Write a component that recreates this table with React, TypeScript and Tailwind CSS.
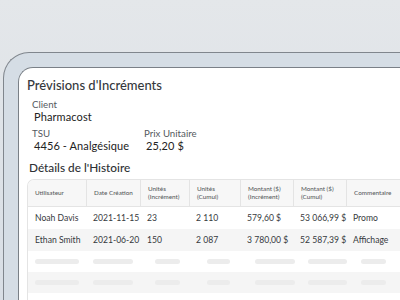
import React from "react";

type Row = {
  user: string;
  date: string;
  incr: string;
  cumul: string;
  amtIncr: string;
  amtCumul: string;
  comment: string;
};

const rows: Row[] = [
  { user: "Noah Davis", date: "2021-11-15", incr: "23", cumul: "2 110", amtIncr: "579,60 $", amtCumul: "53 066,99 $", comment: "Promo" },
  { user: "Ethan Smith", date: "2021-06-20", incr: "150", cumul: "2 087", amtIncr: "3 780,00 $", amtCumul: "52 587,39 $", comment: "Affichage" },
];

const cols = [
  { w: "w-[58px]", head: ["Utilisateur"] },
  { w: "w-[54px]", head: ["Date Création"] },
  { w: "w-[49px]", head: ["Unités", "(Incrément)"] },
  { w: "w-[51px]", head: ["Unités", "(Cumul)"] },
  { w: "w-[53px]", head: ["Montant ($)", "(Incrément)"] },
  { w: "w-[53px]", head: ["Montant ($)", "(Cumul)"] },
  { w: "w-[70px]", head: ["Commentaire"] },
];

// skeleton bar widths per column for the loading rows
const skel = [
  "ml-[7px] w-[44px]",
  "ml-[7px] w-[40px]",
  "ml-[15px] w-[25px]",
  "ml-[18px] w-[23px]",
  "ml-[15px] w-[40px]",
  "ml-[15px] w-[39px]",
  "ml-[15px] w-[25px]",
];

function Field({ label, value, className = "" }: { label: string; value: string; className?: string }) {
  return (
    <div className={`flex flex-col ${className}`}>
      <span className="text-[9.7px] leading-[12px] text-[#555a60]">{label}</span>
      <span className="ml-[2px] text-[11px] leading-[13px] tracking-[0.1px] text-[#222]">{value}</span>
    </div>
  );
}

export default function App() {
  return (
    <div
      className="h-[300px] w-[400px] overflow-hidden bg-gradient-to-b from-[#e4e7ea] to-[#d8dee5]"
      style={{ fontFamily: "Lato, 'Open Sans', sans-serif" }}
    >
      <div className="ml-[3px] mt-[52px] h-[300px] w-[480px] rounded-tl-[26px] border-l-[1.5px] border-t-[1.5px] border-[#80868d] bg-[#d5dde5] pl-[14px] pt-[14px]">
        <div className="h-[300px] w-[460px] rounded-tl-[15px] border-l-[1.5px] border-t-[1.5px] border-[#7a8087] bg-white pl-[8px] pt-[7px]">
          <h1 className="text-[13px] font-medium leading-[20px] text-[#35383c]">
            Prévisions d'Incréments
          </h1>
          <div className="ml-[5px] mt-[3px] flex flex-col gap-[4px]">
            <Field label="Client" value="Pharmacost" />
            <div className="flex">
              <Field label="TSU" value="4456 - Analgésique" className="w-[112px]" />
              <Field label="Prix Unitaire" value="25,20 $" />
            </div>
          </div>
          <h2 className="ml-[2px] mt-[8px] text-[11.8px] font-medium leading-[16px] text-[#2e3135]">
            Détails de l'Histoire
          </h2>
          <div className="mt-[3px] w-[420px] overflow-hidden rounded-tl-[7px] border-l border-t border-[#e4e4e4]">
            <div className="flex h-[27px] items-center border-b border-[#e4e4e4] bg-[#f7f7f7]">
              {cols.map((c, i) => (
                <div
                  key={i}
                  className={`${c.w} flex h-full shrink-0 flex-col justify-center px-[7px] text-[6.3px] font-medium leading-[8px] text-[#5a5d61] ${i > 0 ? "border-l border-[#e4e4e4]" : ""}`}
                >
                  {c.head.map((h) => (
                    <span key={h} className="whitespace-nowrap">{h}</span>
                  ))}
                </div>
              ))}
            </div>
            {rows.map((r, i) => (
              <div
                key={r.user}
                className={`flex h-[22px] items-center text-[8.6px] text-[#36393d] ${i % 2 === 1 ? "bg-[#f5f5f5]" : "bg-white"}`}
              >
                {[r.user, r.date, r.incr, r.cumul, r.amtIncr, r.amtCumul, r.comment].map((v, j) => (
                  <div key={j} className={`${cols[j].w} shrink-0 whitespace-nowrap px-[7px]`}>
                    {v}
                  </div>
                ))}
              </div>
            ))}
            {[0, 1, 2].map((k) => (
              <div key={k} className={`flex h-[21px] items-center ${k % 2 === 1 ? "bg-[#f5f5f5]" : "bg-white"}`}>
                {cols.map((c, j) => (
                  <div key={j} className={`${c.w} shrink-0`}>
                    <div className={`${skel[j]} h-[5px] rounded-full bg-[#ececec]`} />
                  </div>
                ))}
              </div>
            ))}
          </div>
        </div>
      </div>
    </div>
  );
}
